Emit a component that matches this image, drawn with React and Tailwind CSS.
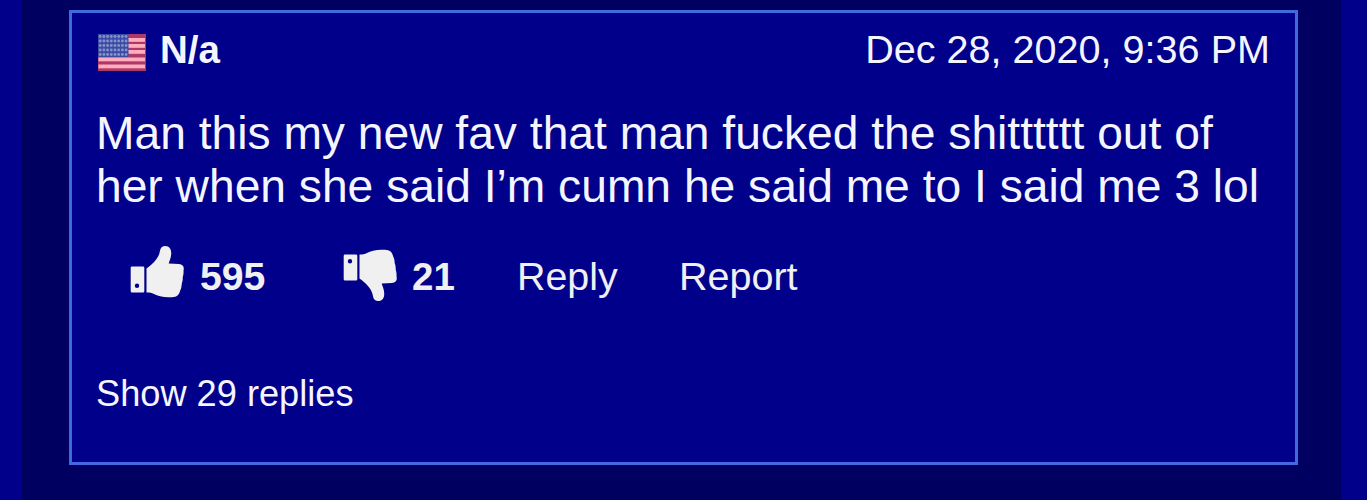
const stars = Array.from({ length: 40 }, (_, i) => ({ x: i % 8, y: Math.floor(i / 8) }));

function Flag() {
  return (
    <svg className="h-[37px] w-[48px] shrink-0" viewBox="0 0 48 37">
      <rect width="48" height="37" fill="#b03868" />
      {[4.5, 10.5, 16.5, 24, 31].map((y) => (
        <rect key={y} x="0.5" y={y - 0.5} width="46.5" height="3.8" fill="#ffaebd" />
      ))}
      <rect width="30.500" height="23" fill="#3c4ca4" />
      {stars.map((s, i) => (
        <circle key={i} cx={2.2 + s.x * 3.7} cy={2.5 + s.y * 4.5} r="1.4" fill="#8494cc" />
      ))}
    </svg>
  );
}

function ThumbUp() {
  return (
    <svg className="h-[52px] w-[54px] shrink-0" viewBox="0 0 54 52">
      <path
        fill="#f0f0f0"
        fillRule="evenodd"
        d="M2 20.500h11q1.300 0 1.300 1.300v23.400q0 1.300-1.300 1.300H2q-1.300 0-1.300-1.300V21.800q0-1.300 1.300-1.300ZM7 37.500a2.200 2.200 0 1 0 0 4.400 2.200 2.200 0 0 0 0-4.400Z"
      />
      <path
        fill="#f0f0f0"
        d="M16.500 22.500C22 18.500 28 13 29.500 7c.7-3 1-7 5.500-7C40 0 41.500 4 41.200 8c-.2 4-2 7.500-2.500 9.500L49 18c4 .4 5.500 3 4.500 6.500.3 3-.3 5-.8 7 .2 2.500-.3 4.500-1 6.500-.1 2.500-.5 4.500-1.500 6.500C49 49 47 51 42 51.200c-8 .6-14-1-18-3.200-2.500-1.300-4-1.500-7.500-1.500Z"
      />
    </svg>
  );
}

export default function App() {
  return (
    <div className="flex h-[500px] w-[1367px] overflow-hidden bg-[#00008b] pr-[26px] pl-[22px] font-['Liberation_Sans',Arial,sans-serif] text-[#f5f5ff]">
      <div className="w-full bg-[#000060] pt-[10px] pl-[47px]">
        <article className="h-[455px] w-[1229px] border-[3px] border-[#4169e1] bg-[#00008b] px-[25px] pt-[13px]">
          <header className="flex h-[46px] items-center">
            <span className="ml-px pt-[6px]"><Flag /></span>
            <strong className="ml-[14px] pt-px text-[38.500px] leading-[46px]">N/a</strong>
            <time className="ml-auto text-[39.600px] leading-[46px] whitespace-nowrap">Dec 28, 2020, 9:36 PM</time>
          </header>
          <p className="mt-[35px] -ml-px text-[46.200px] leading-[53px] whitespace-nowrap">
            Man this my new fav that man fucked the shitttttt out of
            <br />
            her when she said I’m cumn he said me to I said me 3 lol
          </p>
          <div className="mt-[28px] flex h-[64px] items-center pl-[33px] text-[39.200px] text-[#f0f0f0]">
            <span className="pb-[2px]"><ThumbUp /></span>
            <strong className="ml-[16px] w-[143px] pt-[8px]">595</strong>
            <span className="mt-[3px] rotate-180 -scale-x-100"><ThumbUp /></span>
            <strong className="ml-[15px] w-[43px] pt-[8px] text-[38.500px]">21</strong>
            <span className="ml-[62px] w-[100px] pt-[8px] text-[39.400px]">Reply</span>
            <span className="ml-[62px] pt-[8px] text-[39.500px]">Report</span>
          </div>
          <div className="mt-[65px] -ml-px text-[36.200px] leading-[48px]">Show 29 replies</div>
        </article>
      </div>
    </div>
  );
}
